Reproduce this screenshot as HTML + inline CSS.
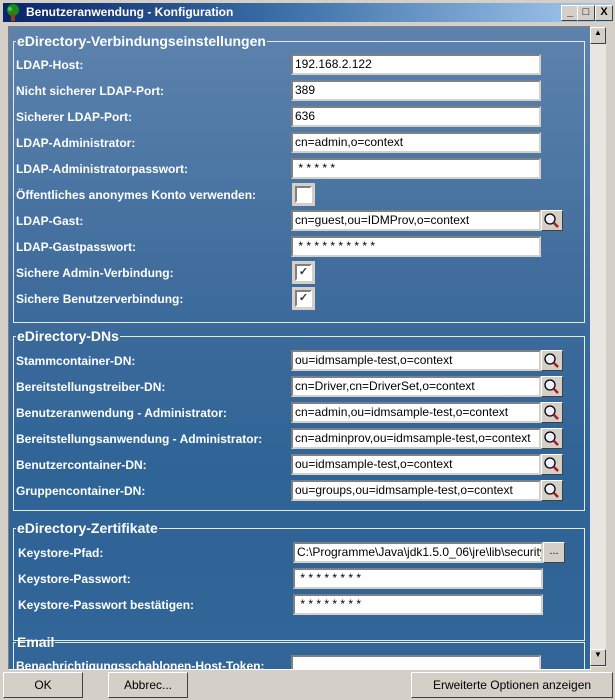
<!DOCTYPE html><html><head><style>
body{margin:0;width:615px;height:700px;background:#d4d0c8;font-family:"Liberation Sans",sans-serif;position:relative;overflow:hidden}
.a{position:absolute}
#tb{left:3px;top:3px;width:609px;height:19px;background:linear-gradient(90deg,#0a246a,#3a6ea5 45%,#a6caf0)}
#tb span{position:absolute;left:23px;top:2px;color:#fff;font-weight:bold;font-size:12px}
.wb{top:5px;width:16px;height:14px;background:#d4d0c8;border:1px solid;border-color:#fff #404040 #404040 #fff;font-size:11px;font-weight:bold;text-align:center;line-height:13px}
#pn{left:8px;top:26px;width:581px;height:642px;background:linear-gradient(180deg,#5d83ad 0%,#3f6c9c 40%,#2f6496 70%,#326598 100%);border:1px solid;border-color:#808080 #fff #fff #808080;overflow:hidden}
fieldset{position:absolute;left:4px;width:569px;border:1px solid #e6eaf0;margin:0;padding:0;box-sizing:border-box;width:572px}
legend{margin-left:2px;padding:0 1px;color:#fff;font-weight:bold;font-size:14px;line-height:16px}
.l{position:absolute;color:#fff;font-weight:bold;font-size:12px;left:7px}
.i{position:absolute;height:17px;background:#fff;border:2px solid;border-color:#808080 #d4d0c8 #d4d0c8 #808080;font-size:12px;line-height:17px;padding-left:2px;white-space:nowrap;overflow:hidden;color:#000;box-sizing:content-box}
.sb{position:absolute;width:20px;height:19px;background:#d4d0c8;border:1px solid;border-color:#fff #404040 #404040 #fff}
.cb{position:absolute;width:13px;height:13px;background:#fff;border:2px solid;border-color:#808080 #fff #fff #808080;outline:3px solid #d4d0c8;font-size:11px;text-align:center;line-height:13px;font-weight:bold;color:#333}
#scr{left:590px;top:27px;width:16px;height:640px;background:#e8e6e0}
.bt{position:absolute;top:672px;height:24px;background:#d4d0c8;border:1px solid;border-color:#fff #404040 #404040 #fff;font-size:12px;text-align:center;line-height:24px}
</style></head><body>
<svg width="0" height="0" style="position:absolute"><defs><g id="mg"><circle cx="8" cy="8" r="5" fill="#eef" stroke="#000" stroke-width="1.3"/><path d="M11.5 11.5 L16 16" stroke="#a02020" stroke-width="2.5"/></g></defs></svg>
<div class="a" id="tb"><svg class="a" style="left:2px;top:1px" width="16" height="17"><circle cx="8" cy="6" r="6" fill="#1a8a1a"/><circle cx="5" cy="5" r="2" fill="#50c050"/><rect x="6" y="10" width="4" height="7" fill="#8b4513"/></svg><span>Benutzeranwendung - Konfiguration</span></div>
<div class="a wb" style="left:561px">_</div><div class="a wb" style="left:577px">□</div><div class="a wb" style="left:595px">X</div>
<div class="a" id="pn">
<fieldset style="top:6px;height:290px"><legend>eDirectory-Verbindungseinstellungen</legend></fieldset>
<fieldset style="top:301px;height:183px"><legend>eDirectory-DNs</legend></fieldset>
<fieldset style="top:493px;height:121px"><legend>eDirectory-Zertifikate</legend></fieldset>
<fieldset style="top:607px;height:70px"><legend>Email</legend></fieldset>
<div class="l" style="top:31px">LDAP-Host:</div><div class="i" style="left:282px;top:27px;width:244px">192.168.2.122</div>
<div class="l" style="top:57px">Nicht sicherer LDAP-Port:</div><div class="i" style="left:282px;top:53px;width:244px">389</div>
<div class="l" style="top:83px">Sicherer LDAP-Port:</div><div class="i" style="left:282px;top:79px;width:244px">636</div>
<div class="l" style="top:109px">LDAP-Administrator:</div><div class="i" style="left:282px;top:105px;width:244px">cn=admin,o=context</div>
<div class="l" style="top:135px">LDAP-Administratorpasswort:</div><div class="i" style="left:282px;top:131px;width:244px">&nbsp;* * * * *</div>
<div class="l" style="top:161px">Öffentliches anonymes Konto verwenden:</div><div class="cb" style="left:286px;top:159px"></div>
<div class="l" style="top:187px">LDAP-Gast:</div><div class="i" style="left:282px;top:183px;width:244px">cn=guest,ou=IDMProv,o=context</div><div class="sb" style="left:532px;top:183px"><svg width="20" height="19"><use href="#mg"/></svg></div>
<div class="l" style="top:213px">LDAP-Gastpasswort:</div><div class="i" style="left:282px;top:209px;width:244px">&nbsp;* * * * * * * * * *</div>
<div class="l" style="top:239px">Sichere Admin-Verbindung:</div><div class="cb" style="left:286px;top:237px">✓</div>
<div class="l" style="top:265px">Sichere Benutzerverbindung:</div><div class="cb" style="left:286px;top:263px">✓</div>
<div class="l" style="top:327px">Stammcontainer-DN:</div><div class="i" style="left:282px;top:323px;width:244px">ou=idmsample-test,o=context</div><div class="sb" style="left:532px;top:323px"><svg width="20" height="19"><use href="#mg"/></svg></div>
<div class="l" style="top:353px">Bereitstellungstreiber-DN:</div><div class="i" style="left:282px;top:349px;width:244px">cn=Driver,cn=DriverSet,o=context</div><div class="sb" style="left:532px;top:349px"><svg width="20" height="19"><use href="#mg"/></svg></div>
<div class="l" style="top:379px">Benutzeranwendung - Administrator:</div><div class="i" style="left:282px;top:375px;width:244px">cn=admin,ou=idmsample-test,o=context</div><div class="sb" style="left:532px;top:375px"><svg width="20" height="19"><use href="#mg"/></svg></div>
<div class="l" style="top:405px">Bereitstellungsanwendung - Administrator:</div><div class="i" style="left:282px;top:401px;width:244px">cn=adminprov,ou=idmsample-test,o=context</div><div class="sb" style="left:532px;top:401px"><svg width="20" height="19"><use href="#mg"/></svg></div>
<div class="l" style="top:431px">Benutzercontainer-DN:</div><div class="i" style="left:282px;top:427px;width:244px">ou=idmsample-test,o=context</div><div class="sb" style="left:532px;top:427px"><svg width="20" height="19"><use href="#mg"/></svg></div>
<div class="l" style="top:457px">Gruppencontainer-DN:</div><div class="i" style="left:282px;top:453px;width:244px">ou=groups,ou=idmsample-test,o=context</div><div class="sb" style="left:532px;top:453px"><svg width="20" height="19"><use href="#mg"/></svg></div>
<div class="l" style="left:9px;top:519px">Keystore-Pfad:</div><div class="i" style="left:284px;top:515px;width:244px">C:\Programme\Java\jdk1.5.0_06\jre\lib\security\cacerts</div><div class="sb" style="left:534px;top:515px;text-align:center;font-size:11px;line-height:16px">...</div>
<div class="l" style="left:9px;top:545px">Keystore-Passwort:</div><div class="i" style="left:284px;top:541px;width:244px">&nbsp;* * * * * * * *</div>
<div class="l" style="left:9px;top:571px">Keystore-Passwort bestätigen:</div><div class="i" style="left:284px;top:567px;width:244px">&nbsp;* * * * * * * *</div>
<div class="l" style="top:632px">Benachrichtigungsschablonen-Host-Token:</div><div class="i" style="left:282px;top:628px;width:244px"></div>
</div>
<div class="a" id="scr"><div class="sb" style="left:0;top:0;width:14px;height:15px;font-size:8px;text-align:center">▲</div><div class="sb" style="left:0;top:622px;width:14px;height:15px;font-size:8px;text-align:center">▼</div></div>
<div class="bt" style="left:3px;width:78px">OK</div>
<div class="bt" style="left:108px;width:78px">Abbrec...</div>
<div class="bt" style="left:411px;width:200px">Erweiterte Optionen anzeigen</div>
</body></html>
